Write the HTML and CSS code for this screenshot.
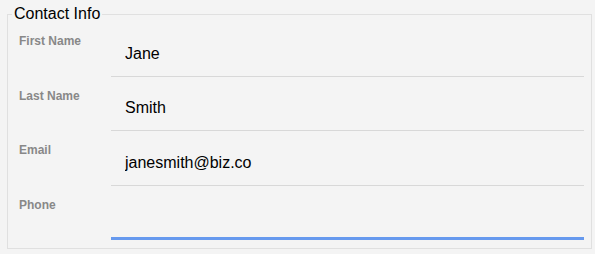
FILE: index.html
```html
<!DOCTYPE html>
<html>
<head>
<meta charset="utf-8">
<link rel="stylesheet" href="styles.css">
</head>
<body>
<div class="page">
  <fieldset class="box">
    <legend class="title">Contact Info</legend>
    <div class="row">
      <label class="label" for="fn">First Name</label>
      <input class="field" id="fn" type="text" value="Jane">
    </div>
    <div class="row">
      <label class="label" for="ln">Last Name</label>
      <input class="field" id="ln" type="text" value="Smith">
    </div>
    <div class="row">
      <label class="label" for="em">Email</label>
      <input class="field" id="em" type="text" value="janesmith@biz.co">
    </div>
    <div class="row">
      <label class="label" for="ph">Phone</label>
      <input class="field field-active" id="ph" type="text" value="">
    </div>
  </fieldset>
</div>
</body>
</html>
```

FILE: styles.css
```css
html, body {
  margin: 0;
  padding: 0;
  background: #f4f4f4;
  font-family: "Liberation Sans", Arial, sans-serif;
}

.page {
  padding: 5px 3px 0 7px;
}

.box {
  margin: 0;
  border: 1px solid #e0e0e0;
  padding: 11px 7px 8px 11px;
  min-width: 0;
}

.title {
  margin-left: -7px;
  padding: 0 2px;
  font-size: 16px;
  color: #000;
}

.row {
  display: flex;
  align-items: flex-start;
  height: 42.5px;
  margin-bottom: 12px;
}

.row:last-child {
  margin-bottom: 0;
}

.label {
  width: 92px;
  flex: none;
  font-size: 12px;
  font-weight: bold;
  color: #888888;
}

.field {
  flex: 1;
  min-width: 0;
  box-sizing: border-box;
  height: 42.5px;
  margin: 0;
  border: none;
  border-bottom: 1px solid #d8d8d8;
  background: transparent;
  padding: 0 0 2px 14px;
  font-family: "Liberation Sans", Arial, sans-serif;
  font-size: 16px;
  color: #000;
  outline: none;
}

.field-active {
  border-bottom: 3px solid #6699ee;
}
```
